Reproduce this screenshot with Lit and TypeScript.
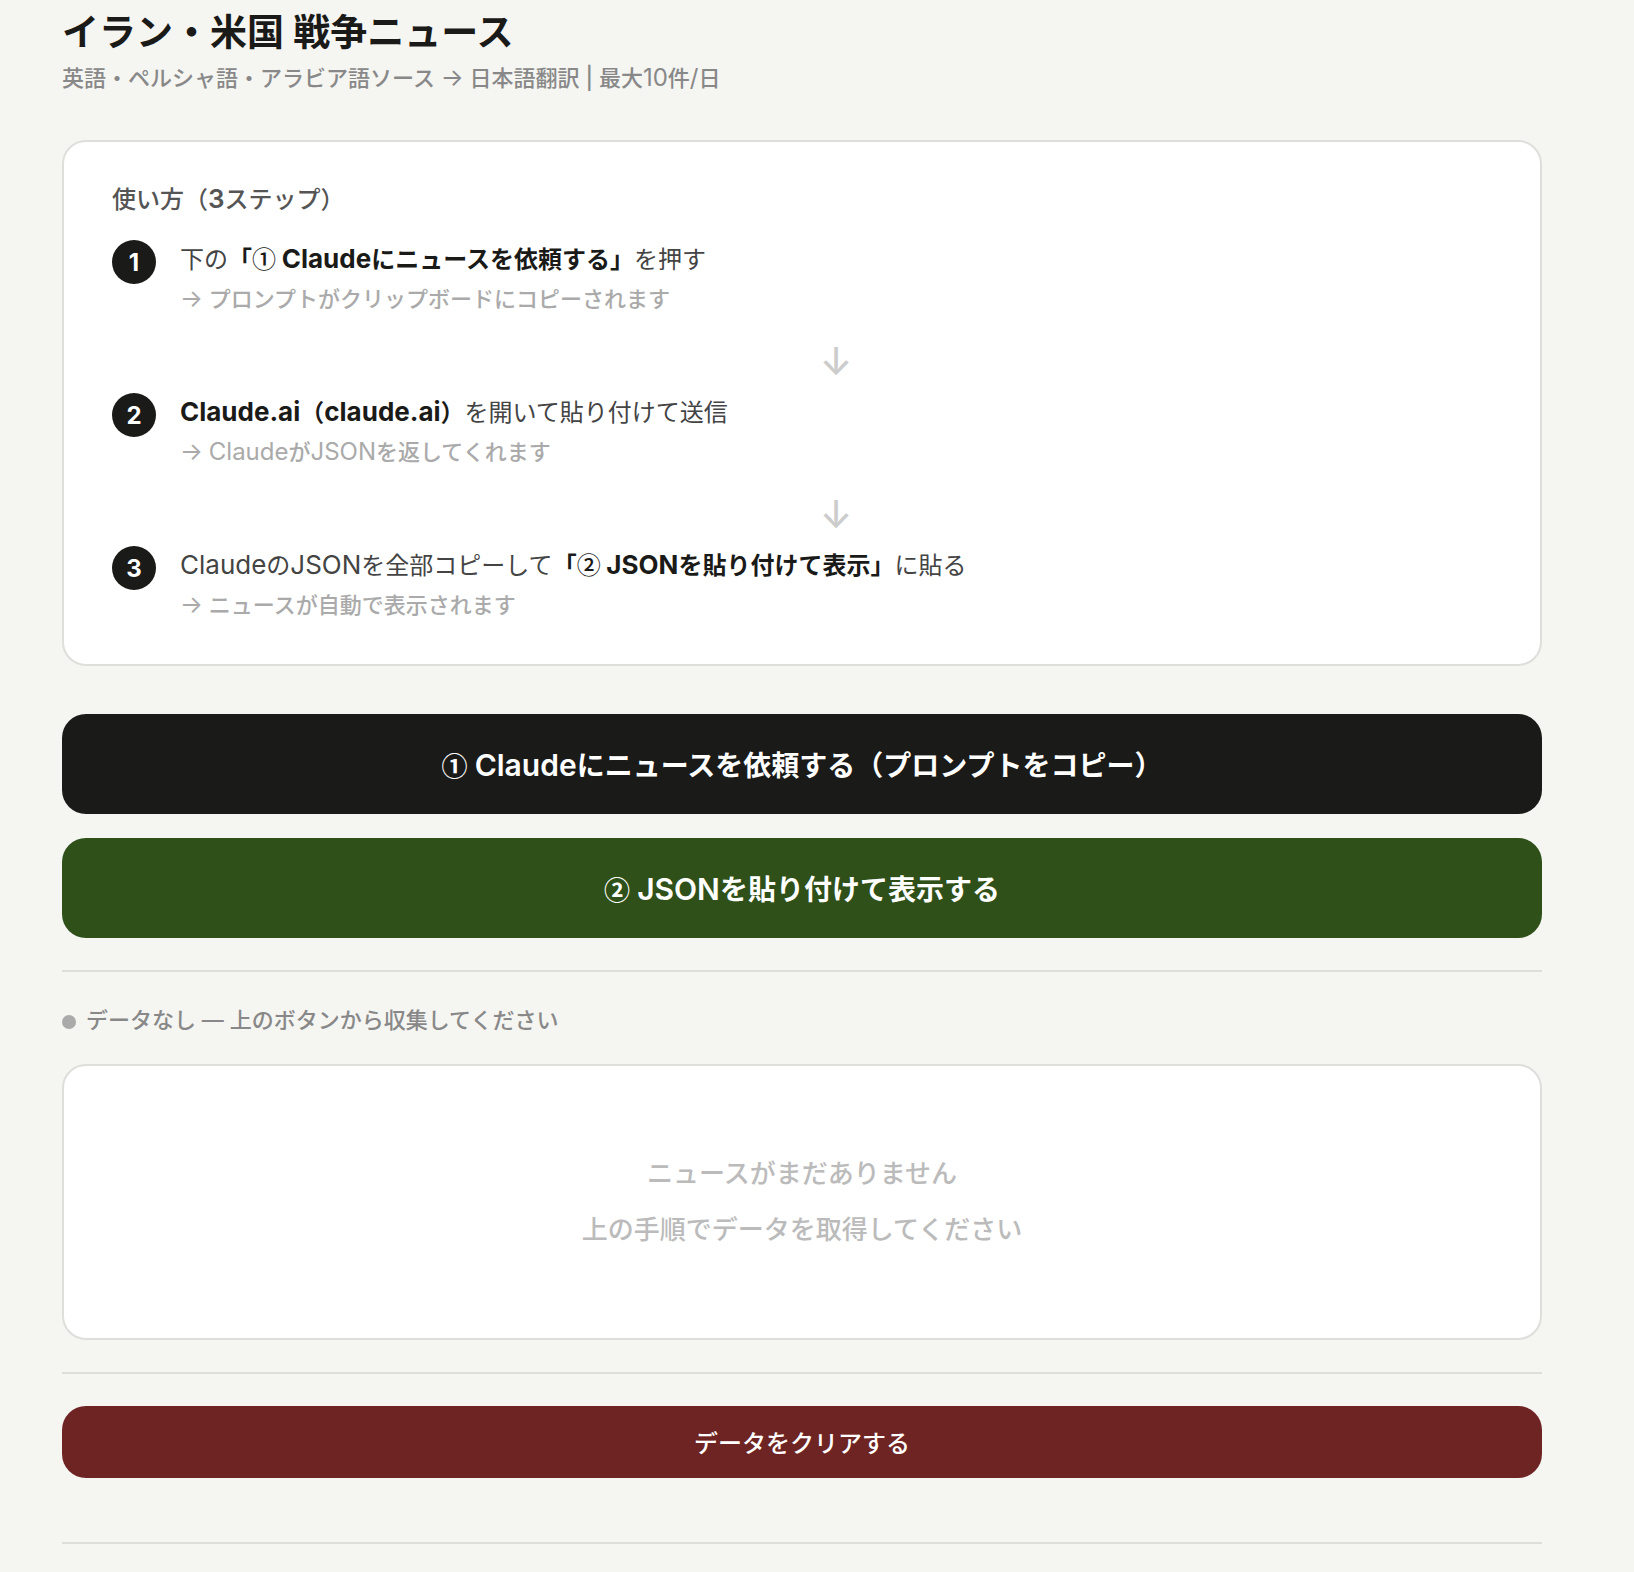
import { LitElement, css, html, nothing, type TemplateResult } from "lit";
import { customElement } from "lit/decorators.js";

interface Step {
  title: TemplateResult;
  note: TemplateResult;
}

/** Latin letters and arrows, set a step larger than the Japanese around them. */
const latin = (text: string) => html`<span class="latin">${text}</span>`;

/** Circled numbers, taken from the Japanese face so that they fill one em. */
const circled = (text: string) => html`<span class="circled">${text}</span>`;

const steps: Step[] = [
  {
    title: html`下の<strong class="strong">「${circled("①")} ${latin("Claude")}にニュースを依頼する」</strong>を押す`,
    note: html`${latin("→")} プロンプトがクリップボードにコピーされます`,
  },
  {
    title: html`<strong class="strong">${latin("Claude.ai")}（${latin("claude.ai")}）</strong>を開いて貼り付けて送信`,
    note: html`${latin("→")} ${latin("Claude")}が${latin("JSON")}を返してくれます`,
  },
  {
    title: html`${latin("Claude")}の${latin("JSON")}を全部コピーして<strong class="strong">「${circled("②")} ${latin("JSON")}を貼り付けて表示」</strong>に貼る`,
    note: html`${latin("→")} ニュースが自動で表示されます`,
  },
];

@customElement("app-root")
export class AppRoot extends LitElement {
  static styles = css`
    :host {
      display: block;
      box-sizing: border-box;
      min-height: 100vh;
      padding: 9px 92px 28px 62px;
      background: #f5f5f2;
      color: #1a1a18;
      font-family: Inter, "Noto Sans CJK JP", sans-serif;
      font-size: 24px;
    }
    .latin {
      line-height: 1;
    }
    .circled {
      font-family: "Noto Sans CJK JP", sans-serif;
      line-height: 1;
    }
    .title {
      margin: 0;
      font-size: 37px;
      line-height: 48px;
      font-weight: 600;
    }
    .subtitle {
      margin: 3px 0 44px;
      font-size: 22px;
      line-height: 36px;
      font-weight: 500;
      color: #888;
    }
    .subtitle .latin,
    .note .latin {
      font-size: 24px;
      font-weight: 400;
    }
    .card {
      border: 2px solid #dededb;
      border-radius: 24px;
      background: #fff;
    }
    .guide {
      padding: 40px 48px;
    }
    .guide-title {
      margin: 0 0 22px;
      font-size: 24px;
      line-height: 36px;
      font-weight: 500;
      color: #555;
    }
    .guide-title .latin {
      font-size: 26px;
      font-weight: 600;
    }
    .steps {
      margin: 0;
      padding: 0;
      list-style: none;
    }
    .step {
      display: flex;
      align-items: flex-start;
      gap: 24px;
    }
    .number {
      flex: none;
      width: 44px;
      height: 44px;
      border-radius: 50%;
      background: #1a1a18;
      color: #fff;
      font-size: 24px;
      line-height: 46px;
      font-weight: 700;
      text-align: center;
    }
    .body {
      flex: 1;
    }
    .text {
      margin: 0;
      line-height: 40px;
      color: #444;
    }
    .text .latin {
      font-size: 26px;
    }
    .text .circled {
      font-weight: 500;
    }
    .strong {
      font-weight: 700;
      color: #1a1a18;
    }
    .note {
      margin: 0;
      font-size: 22px;
      line-height: 38px;
      font-weight: 500;
      color: #aaa;
    }
    .arrow {
      padding: 23px 0 12px;
      font-size: 38px;
      line-height: 40px;
      font-weight: 500;
      text-align: center;
      color: #ccc;
    }
    .actions {
      display: grid;
      gap: 24px;
      margin-top: 48px;
    }
    .button {
      display: block;
      width: 100%;
      margin: 0;
      border: 0;
      border-radius: 24px;
      padding: 32px 24px 28px;
      color: #fff;
      font-family: inherit;
      font-size: 28px;
      line-height: 40px;
      font-weight: 600;
      cursor: pointer;
    }
    .button .latin {
      font-size: 30px;
    }
    .button .circled {
      font-size: 26px;
      font-weight: 700;
    }
    .ask {
      background: #1a1a18;
    }
    .paste {
      background: #2f5019;
    }
    .clear {
      padding: 20px 24px 16px;
      background: #6e2423;
      font-size: 24px;
      line-height: 36px;
      font-weight: 500;
    }
    .rule {
      margin: 32px 0;
      border: 0;
      border-top: 2px solid #dededb;
    }
    .last {
      margin: 64px 0 0;
    }
    .status {
      display: flex;
      align-items: flex-start;
      gap: 10px;
      margin: 0 0 28px;
      font-size: 22px;
      line-height: 32px;
      font-weight: 500;
      color: #888;
    }
    .dot {
      width: 14px;
      height: 14px;
      margin-top: 11px;
      border-radius: 50%;
      background: #aaa;
    }
    .empty {
      padding: 80px 24px;
      font-size: 26px;
      line-height: 56px;
      font-weight: 500;
      text-align: center;
      color: #bbb;
    }
    .line {
      margin: 0;
    }
  `;

  render() {
    return html`
      <header>
        <h1 class="title">イラン・米国 戦争ニュース</h1>
        <p class="subtitle">
          英語・ペルシャ語・アラビア語ソース ${latin("→")} 日本語翻訳 | 最大${latin("10")}件${latin("/")}日
        </p>
      </header>
      <main>
        <section class="card guide">
          <h2 class="guide-title">使い方（${latin("3")}ステップ）</h2>
          <ol class="steps">
            ${steps.map(
              (step, i) => html`
                <li class="step">
                  <span class="number">${i + 1}</span>
                  <div class="body">
                    <p class="text">${step.title}</p>
                    <p class="note">${step.note}</p>
                    ${i < steps.length - 1 ? html`<div class="arrow">↓</div>` : nothing}
                  </div>
                </li>
              `,
            )}
          </ol>
        </section>
        <div class="actions">
          <button class="button ask" type="button">
            ${circled("①")} ${latin("Claude")}にニュースを依頼する（プロンプトをコピー）
          </button>
          <button class="button paste" type="button">${circled("②")} ${latin("JSON")}を貼り付けて表示する</button>
        </div>
        <hr class="rule" />
        <p class="status"><span class="dot"></span>データなし — 上のボタンから収集してください</p>
        <section class="card empty">
          <p class="line">ニュースがまだありません</p>
          <p class="line">上の手順でデータを取得してください</p>
        </section>
        <hr class="rule" />
        <button class="button clear" type="button">データをクリアする</button>
        <hr class="rule last" />
      </main>
    `;
  }
}
